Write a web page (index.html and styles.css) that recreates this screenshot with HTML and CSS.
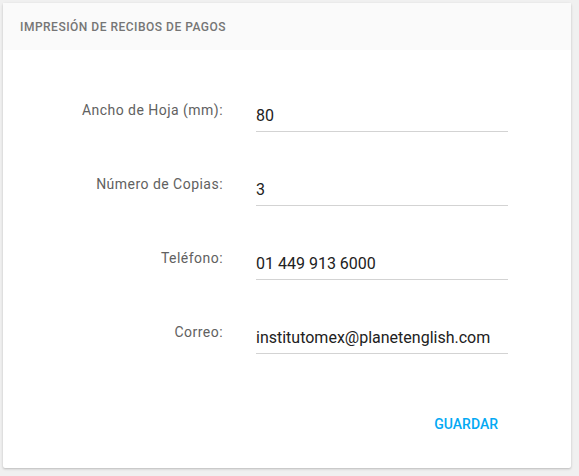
FILE: index.html
```html
<!DOCTYPE html>
<html lang="es">
<head>
<meta charset="utf-8">
<title>Impresión de recibos de pagos</title>
<link rel="stylesheet" href="styles.css">
</head>
<body>
<div class="card">
  <div class="card-header">Impresión de recibos de pagos</div>
  <form class="card-body">
    <div class="grid">
      <label class="label" for="ancho">Ancho de Hoja (mm):</label>
      <input class="field" id="ancho" type="text" value="80">
      <label class="label" for="copias">Número de Copias:</label>
      <input class="field" id="copias" type="text" value="3">
      <label class="label" for="tel">Teléfono:</label>
      <input class="field" id="tel" type="text" value="01 449 913 6000">
      <label class="label" for="correo">Correo:</label>
      <input class="field" id="correo" type="text" value="institutomex@planetenglish.com">
    </div>
    <div class="actions">
      <button type="button" class="btn">Guardar</button>
    </div>
  </form>
</div>
</body>
</html>
```
FILE: styles.css
```css
html, body {
  margin: 0;
  padding: 0;
  background: #f0f0f0;
  font-family: Roboto, "Liberation Sans", sans-serif;
}
body {
  padding: 3px 8px 8px 3px;
}
.card {
  width: 568px;
  height: 465px;
  background: #ffffff;
  border-radius: 2px;
  box-shadow: 0 1px 3px rgba(0,0,0,0.14), 0 1px 2px rgba(0,0,0,0.10);
  display: flex;
  flex-direction: column;
}
.card-header {
  height: 47px;
  box-sizing: border-box;
  background: #fafafa;
  padding-left: 17px;
  display: flex;
  align-items: center;
  text-transform: uppercase;
  font-size: 12px;
  font-weight: 500;
  letter-spacing: 0.5px;
  color: #757575;
}
.card-body {
  flex: 1;
  margin: 0;
  padding: 49px 0 26px 20px;
  display: flex;
  flex-direction: column;
}
.grid {
  display: grid;
  grid-template-columns: 200px 252px;
  column-gap: 33px;
  row-gap: 41px;
}
.label {
  text-align: right;
  font-size: 14px;
  line-height: 20px;
  letter-spacing: 0.47px;
  padding-top: 1px;
  color: #616161;
}
.field {
  box-sizing: border-box;
  height: 33px;
  width: 252px;
  padding: 0;
  margin: 0;
  border: none;
  border-bottom: 1px solid #d3d3d3;
  background: transparent;
  font-family: Roboto, "Liberation Sans", sans-serif;
  font-size: 16px;
  color: #212121;
  outline: none;
}
.actions {
  margin-top: auto;
  display: flex;
  justify-content: flex-end;
  padding-right: 65px;
}
.btn {
  height: 36px;
  padding: 0 8px;
  border: none;
  background: transparent;
  font-family: Roboto, "Liberation Sans", sans-serif;
  font-size: 14px;
  font-weight: 500;
  text-transform: uppercase;
  color: #03a9f4;
  cursor: pointer;
}
```
